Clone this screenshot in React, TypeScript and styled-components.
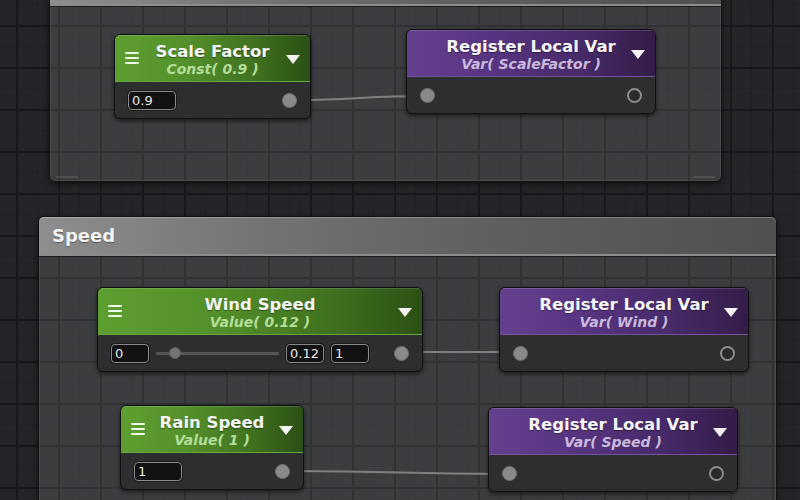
import React from "react";
import styled, { createGlobalStyle, css } from "styled-components";

const GlobalStyle = createGlobalStyle`
    html, body {
        margin: 0;
        padding: 0;
        background: #232427;
    }
    * {
        box-sizing: border-box;
    }
`;

const Canvas = styled.div`
    position: relative;
    width: 800px;
    height: 500px;
    overflow: hidden;
    font-family: "DejaVu Sans", "Liberation Sans", sans-serif;
    background-color: #242528;
    background-image:
        linear-gradient(to right, #17181b 0, #17181b 2px, transparent 2px),
        linear-gradient(to bottom, #17181b 0, #17181b 2px, transparent 2px),
        linear-gradient(to right, rgba(0, 0, 0, 0.08) 0, rgba(0, 0, 0, 0.08) 1px, transparent 1px),
        linear-gradient(to bottom, rgba(0, 0, 0, 0.08) 0, rgba(0, 0, 0, 0.08) 1px, transparent 1px);
    background-size: 42px 42px, 42px 42px, 10.5px 10.5px, 10.5px 10.5px;
    background-position: 16px 25px, 16px 25px, 16px 25px, 16px 25px;
`;

const Group = styled.div<{ $x: number; $y: number; $w: number; $h: number }>`
    position: absolute;
    left: ${p => p.$x}px;
    top: ${p => p.$y}px;
    width: ${p => p.$w}px;
    height: ${p => p.$h}px;
    display: flex;
    flex-direction: column;
    border: 1px solid #111214;
    border-radius: 6px;
    background: rgba(255, 255, 255, 0.115);
    box-shadow: 0 2px 6px rgba(0, 0, 0, 0.55), inset 0 0 0 1px rgba(255, 255, 255, 0.08);
`;

const GroupHeader = styled.div`
    height: 39px;
    flex: none;
    display: flex;
    align-items: center;
    padding: 0 13px;
    border-radius: 5px 5px 0 0;
    background: linear-gradient(90deg, #8e8e8e 0%, #747474 30%, #606060 60%, #505050 100%);
    border-bottom: 2px solid #8c8c8c;
    box-shadow: 0 1px 0 #1c1c1e, inset 0 1px 0 rgba(255, 255, 255, 0.25);
    color: #f4f4f4;
    font-size: 18px;
    font-weight: bold;
    text-shadow: 0 1px 1px rgba(0, 0, 0, 0.35);
`;

const GroupBody = styled.div`
    flex: 1;
    position: relative;
`;

const ResizeMark = styled.div<{ $side: "left" | "right" }>`
    position: absolute;
    bottom: 3px;
    ${p => (p.$side === "left" ? "left: 6px;" : "right: 6px;")}
    width: 22px;
    height: 2px;
    background: rgba(255, 255, 255, 0.1);
`;

const palettes = {
    green: {
        header: "linear-gradient(90deg, #5e9f31 0%, #54912b 35%, #417320 70%, #2c5015 100%)",
        edge: "#66a83f",
        sub: "#b3de98",
    },
    purple: {
        header: "linear-gradient(90deg, #65408f 0%, #573480 35%, #472a68 70%, #331c48 100%)",
        edge: "#76549c",
        sub: "#c9b9de",
    },
};

type Kind = keyof typeof palettes;

const NodeBox = styled.div<{ $x: number; $y: number; $w: number }>`
    position: absolute;
    left: ${p => p.$x}px;
    top: ${p => p.$y}px;
    width: ${p => p.$w}px;
    border: 1px solid #101012;
    border-radius: 6px;
    background: #2d2e30;
    box-shadow: 0 2px 4px rgba(0, 0, 0, 0.55);
    overflow: hidden;
`;

const NodeHeader = styled.div<{ $kind: Kind }>`
    display: grid;
    grid-template-columns: 34px 1fr 34px;
    align-items: center;
    height: 47px;
    background: ${p => palettes[p.$kind].header};
    border-bottom: 1px solid ${p => palettes[p.$kind].edge};
    box-shadow: inset 0 1px 0 rgba(255, 255, 255, 0.15);
`;

const TitleBlock = styled.div`
    display: flex;
    flex-direction: column;
    align-items: center;
    padding-top: 3px;
    white-space: nowrap;
`;

const Title = styled.div`
    color: #f5f5f5;
    font-size: 16.5px;
    font-weight: bold;
    line-height: 18px;
    text-shadow: 0 1px 1px rgba(0, 0, 0, 0.4);
`;

const Subtitle = styled.div<{ $kind: Kind }>`
    color: ${p => palettes[p.$kind].sub};
    font-size: 14px;
    font-weight: bold;
    font-style: italic;
    line-height: 16px;
`;

const Burger = styled.div`
    justify-self: center;
    width: 14px;
    display: flex;
    flex-direction: column;
    gap: 3px;
    & > span {
        display: block;
        height: 2px;
        background: #eef7e6;
        border-radius: 1px;
    }
`;

const Arrow = styled.div`
    justify-self: center;
    width: 0;
    height: 0;
    border-left: 7px solid transparent;
    border-right: 7px solid transparent;
    border-top: 9px solid #f4f4f4;
    margin-top: 2px;
`;

const NodeBody = styled.div`
    height: 36px;
    display: flex;
    align-items: center;
    gap: 7px;
    padding: 0 13px;
`;

const Spacer = styled.div`
    flex: 1;
`;

const Field = styled.div<{ $w: number }>`
    width: ${p => p.$w}px;
    height: 19px;
    flex: none;
    display: flex;
    align-items: center;
    padding: 0 3px;
    border: 1px solid #8a8a8a;
    border-radius: 4px;
    background: #121213;
    box-shadow: 0 0 0 1px #1a1a1b;
    color: #e6e6e6;
    font-size: 13px;
`;

const Port = styled.div<{ $ring?: boolean }>`
    width: 15px;
    height: 15px;
    flex: none;
    border-radius: 50%;
    ${p =>
        p.$ring
            ? css`
                  border: 2.5px solid #8d8d8d;
                  background: #2a2a2c;
              `
            : css`
                  background: #8a8a8a;
                  border: 1px solid #6f6f6f;
              `}
`;

const Slider = styled.div`
    position: relative;
    width: 123px;
    height: 12px;
    flex: none;
    display: flex;
    align-items: center;
    &::before {
        content: "";
        position: absolute;
        left: 0;
        right: 0;
        height: 3px;
        border-radius: 2px;
        background: #565658;
    }
`;

const Thumb = styled.div`
    position: absolute;
    top: 0;
    width: 12px;
    height: 12px;
    border-radius: 50%;
    background: #747476;
    border: 1px solid #5a5a5c;
    margin-left: -6px;
`;

const Wires = styled.svg`
    position: absolute;
    left: 0;
    top: 0;
`;

type NodeProps = {
    kind: Kind;
    x: number;
    y: number;
    w: number;
    title: string;
    subtitle: string;
    children?: React.ReactNode;
};

const Node = ({ kind, x, y, w, title, subtitle, children }: NodeProps) => (
    <NodeBox $x={x} $y={y} $w={w}>
        <NodeHeader $kind={kind}>
            {kind === "green" ? (
                <Burger>
                    <span />
                    <span />
                    <span />
                </Burger>
            ) : (
                <div />
            )}
            <TitleBlock>
                <Title>{title}</Title>
                <Subtitle $kind={kind}>{subtitle}</Subtitle>
            </TitleBlock>
            <Arrow />
        </NodeHeader>
        <NodeBody>{children}</NodeBody>
    </NodeBox>
);

const RegisterNode = ({ x, y, name }: { x: number; y: number; name: string }) => (
    <Node kind="purple" x={x} y={y} w={250} title="Register Local Var" subtitle={`Var( ${name} )`}>
        <Port />
        <Spacer />
        <Port $ring />
    </Node>
);

const windMin = 0;
const windMax = 1;
const windValue = 0.12;

const App = () => {
    const thumbPct = ((windValue - windMin) / (windMax - windMin)) * 100;
    return (
        <>
            <GlobalStyle />
            <Canvas>
                <Group $x={49} $y={-34} $w={673} $h={216}>
                    <GroupHeader />
                    <GroupBody>
                        <ResizeMark $side="left" />
                        <ResizeMark $side="right" />
                    </GroupBody>
                </Group>

                <Group $x={38} $y={216} $w={739} $h={320}>
                    <GroupHeader>Speed</GroupHeader>
                    <GroupBody />
                </Group>

                <Wires width={800} height={500}>
                    <g stroke="#808082" strokeWidth={2} fill="none">
                        <path d="M 297 100 C 350 100, 370 96, 422 96" />
                        <path d="M 409 352 L 515 352" />
                        <path d="M 290 471 C 400 471, 400 474, 503 474" />
                    </g>
                </Wires>

                <Node kind="green" x={114} y={34} w={197} title="Scale Factor" subtitle="Const( 0.9 )">
                    <Field $w={48}>0.9</Field>
                    <Spacer />
                    <Port />
                </Node>
                <RegisterNode x={406} y={29} name="ScaleFactor" />

                <Node kind="green" x={97} y={287} w={326} title="Wind Speed" subtitle="Value( 0.12 )">
                    <Field $w={38}>0</Field>
                    <Slider>
                        <Thumb style={{ left: `calc(${thumbPct}% + 4px)` }} />
                    </Slider>
                    <Field $w={38}>0.12</Field>
                    <Field $w={38}>1</Field>
                    <Spacer />
                    <Port />
                </Node>
                <RegisterNode x={499} y={287} name="Wind" />

                <Node kind="green" x={120} y={405} w={184} title="Rain Speed" subtitle="Value( 1 )">
                    <Field $w={48}>1</Field>
                    <Spacer />
                    <Port />
                </Node>
                <RegisterNode x={488} y={407} name="Speed" />
            </Canvas>
        </>
    );
};

export default App;
